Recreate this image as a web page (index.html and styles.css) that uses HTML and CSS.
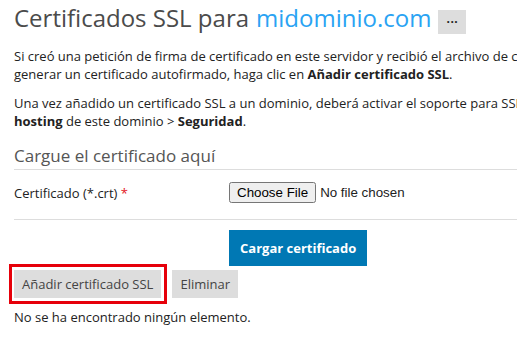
FILE: index.html
```html
<!DOCTYPE html>
<html lang="es">
<head>
  <meta charset="UTF-8">
  <title>Certificados SSL</title>
  <link rel="stylesheet" href="styles.css">
</head>
<body>
  <div class="page">
    <h1 class="title">Certificados SSL para <a href="javascript:;" class="domain">midominio.com</a> <span class="more">&middot;&middot;&middot;</span></h1>
    <p class="hint">Si creó una petición de firma de certificado en este servidor y recibió el archivo de certificado, cárguelo aquí. Para<br>generar un certificado autofirmado, haga clic en <b>Añadir certificado SSL</b>.</p>
    <p class="hint">Una vez añadido un certificado SSL a un dominio, deberá activar el soporte para SSL en la configuración de<br><b>hosting</b> de este dominio &gt; <b>Seguridad</b>.</p>

    <form class="upload">
      <h2 class="legend">Cargue el certificado aquí</h2>
      <div class="row">
        <label class="label">Certificado (*.crt) <span class="req">*</span></label>
        <input type="file" class="file">
      </div>
      <div class="actions">
        <button type="button" class="btn-primary">Cargar certificado</button>
      </div>
    </form>

    <div class="toolbar">
      <span class="mark"><button type="button" class="btn">Añadir certificado SSL</button></span>
      <button type="button" class="btn">Eliminar</button>
    </div>
    <p class="empty">No se ha encontrado ningún elemento.</p>
  </div>
</body>
</html>
```

FILE: styles.css
```css
*{
  margin:0;
  padding:0;
  box-sizing:border-box;
}
body{
  font-family:"Open Sans", sans-serif;
  font-size:13px;
  color:#222;
  background:#fff;
  overflow:hidden;
}
.page{
  width:900px;
  padding:2px 14px 0;
}
.title{
  font-size:24px;
  font-weight:normal;
  color:#4b4b4b;
  line-height:32px;
  display:flex;
  align-items:flex-start;
  gap:7px;
  white-space:nowrap;
}
.domain{
  color:#2aa3f3;
  text-decoration:none;
}
.more{
  display:inline-block;
  width:28px;
  height:24px;
  margin-top:8px;
  background:#ddd;
  color:#222;
  font-size:12px;
  font-weight:bold;
  line-height:24px;
  letter-spacing:0.5px;
  text-align:center;
}
.hint{
  line-height:18px;
  margin-top:13px;
  white-space:nowrap;
}
.hint + .hint{
  margin-top:11px;
}
.upload{
  margin-top:14px;
}
.legend{
  font-size:17px;
  font-weight:normal;
  color:#555;
  line-height:24px;
  padding-bottom:1px;
  border-bottom:1px solid #ddd;
}
.row{
  display:grid;
  grid-template-columns:215px 1fr;
  align-items:center;
  padding:12px 0 16px;
  border-bottom:1px solid #ddd;
}
.req{
  color:#e3141c;
}
.file{
  font-family:"Liberation Sans", Arial, sans-serif;
  font-size:13.333px;
}
.actions{
  padding:10px 0 0 215px;
}
.btn-primary{
  font-family:"Open Sans", sans-serif;
  font-size:13px;
  font-weight:bold;
  color:#fff;
  background:#0078b4;
  border:0;
  height:36px;
  padding:0 11px;
}
.toolbar{
  display:flex;
  gap:11px;
  margin-top:4px;
}
.mark{
  position:relative;
}
/* red highlight drawn around the first button */
.mark::after{
  content:"";
  position:absolute;
  top:-6px;
  left:-5px;
  right:-6px;
  bottom:-6px;
  border:3px solid #e6000a;
}
.btn{
  display:block;
  font-family:"Open Sans", sans-serif;
  font-size:13px;
  color:#444;
  background:#ddd;
  border:0;
  height:28px;
  padding:0 8px;
}
.empty{
  margin-top:10px;
  line-height:18px;
}
```
